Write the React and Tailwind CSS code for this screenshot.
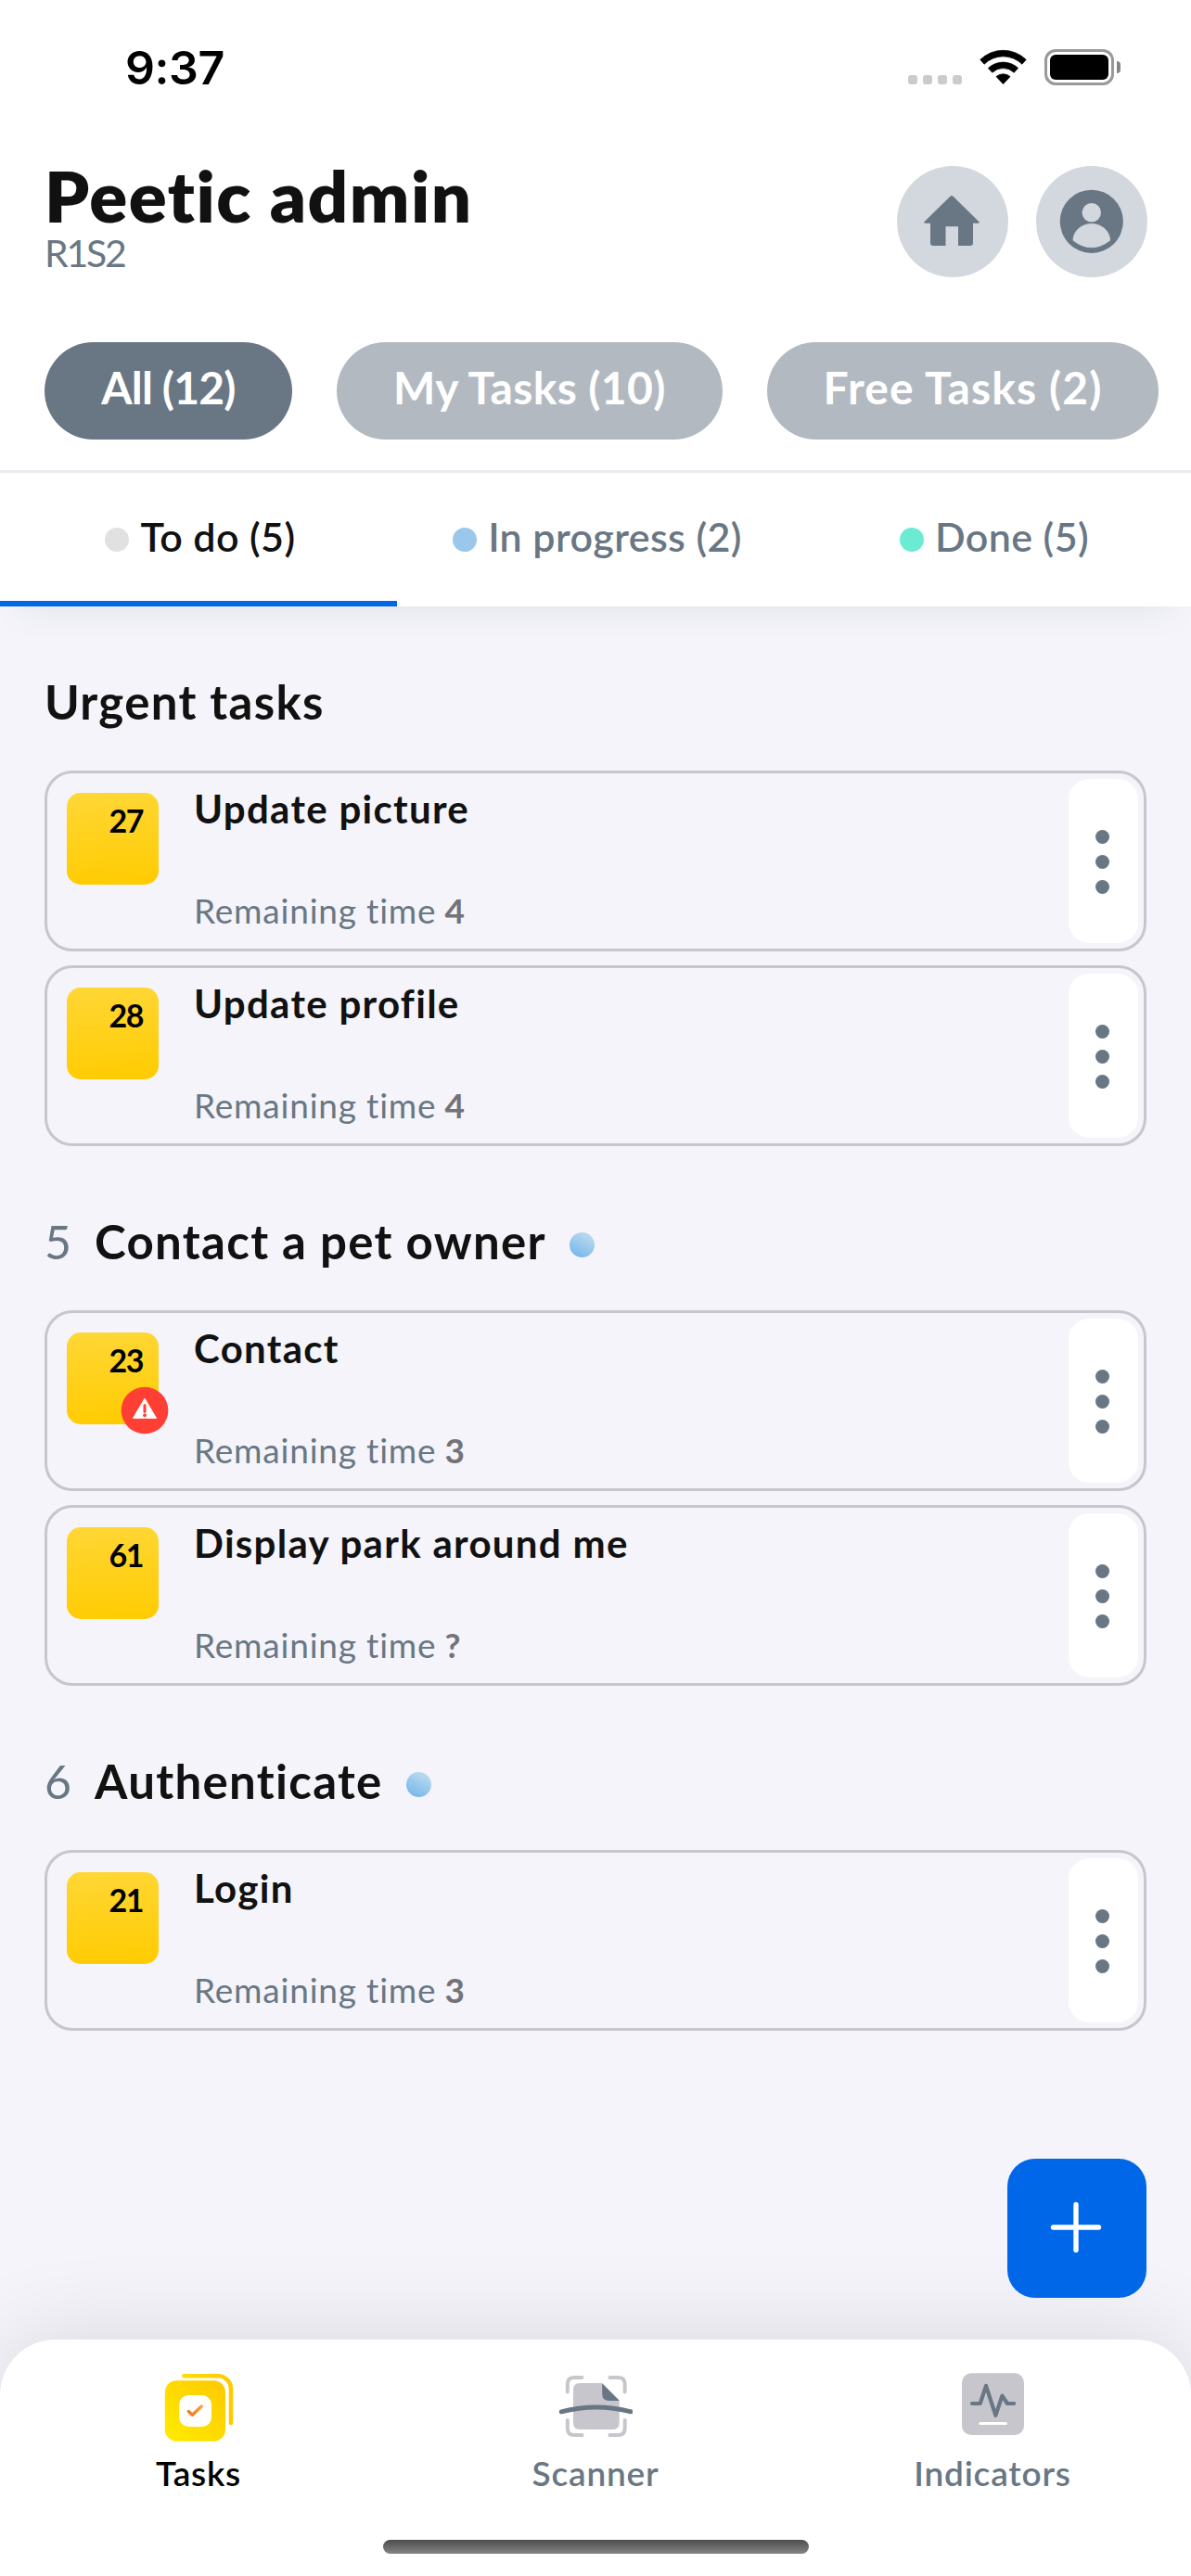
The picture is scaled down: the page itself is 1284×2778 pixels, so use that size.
const filters = [
  { label: 'All (12)', look: 'w-[267px] bg-[#697784] tracking-[-0.8px]' },
  { label: 'My Tasks (10)', look: 'w-[416px] bg-[#b3b9c1] tracking-[0.4px]' },
  { label: 'Free Tasks (2)', look: 'w-[422px] bg-[#b3b9c1] tracking-[1.1px]' },
];

const statuses = [
  { label: 'To do (5)', dot: 'bg-[#e1e1e1]', text: 'text-[#111111]', bar: 'bg-[#0067e9]' },
  { label: 'In progress (2)', dot: 'bg-[#9ac8ed]', text: 'text-[#697784]', bar: 'bg-transparent' },
  { label: 'Done (5)', dot: 'bg-[#6cebd3]', text: 'text-[#697784]', bar: 'bg-transparent' },
];

const sections = [
  {
    title: 'Urgent tasks',
    tasks: [
      { id: '27', title: 'Update picture', remaining: '4' },
      { id: '28', title: 'Update profile', remaining: '4' },
    ],
  },
  {
    number: '5',
    title: 'Contact a pet owner',
    tasks: [
      { id: '23', title: 'Contact', remaining: '3', alert: true },
      { id: '61', title: 'Display park around me', remaining: '?' },
    ],
  },
  {
    number: '6',
    title: 'Authenticate',
    tasks: [{ id: '21', title: 'Login', remaining: '3' }],
  },
];

function StatusBar() {
  return (
    <div className="flex h-[145px] justify-between pl-[135px] pr-[76px]">
      <span className="mt-12 h-[50px] font-[Inter,sans-serif] text-[50px] leading-none font-semibold tracking-[-0.4px] text-black">9:37</span>
      <div className="mt-[53px] flex h-[39px] items-start">
        <div className="mt-7 flex gap-1.5">
          {[0, 1, 2, 3].map((n) => (
            <span key={n} className="size-2.5 rounded-[3px] bg-[#cbcbcb]" />
          ))}
        </div>
        <svg className="ml-[19px] h-[39px] w-[51px]" viewBox="0 0 51 39" fill="#000">
          <path d="M0.8 11.3 A35.5 35.5 0 0 1 50.2 11.3 L45.9 16.2 A29 29 0 0 0 5.1 16.2 Z" stroke="#000" strokeWidth="0.8" strokeLinejoin="round" />
          <path d="M9.4 20.5 A23.5 23.5 0 0 1 41.6 20.5 L37.2 25.2 A17 17 0 0 0 13.8 25.2 Z" stroke="#000" strokeWidth="0.8" strokeLinejoin="round" />
          <path d="M18 29.6 A11.5 11.5 0 0 1 33 29.6 L25.5 37.6 Z" stroke="#000" strokeWidth="0.8" strokeLinejoin="round" />
        </svg>
        <div className="ml-[19px] h-[39px] w-[75px] rounded-[12px] border-[3px] border-[#999999] p-[3px]">
          <div className="h-full w-full rounded-[6px] bg-black" />
        </div>
        <div className="mt-[13px] ml-[3px] h-[13px] w-1 rounded-r-full bg-[#858585]" />
      </div>
    </div>
  );
}

function Header() {
  return (
    <header className="flex h-[224px] items-start justify-between pt-7 pr-[47px] pl-12">
      <div>
        <h1 className="text-[76px] leading-none font-extrabold tracking-[1.5px] text-[#111111]">Peetic admin</h1>
        <p className="mt-[3px] text-[41px] leading-none tracking-[-2.2px] text-[#697784]">R1S2</p>
      </div>
      <div className="mt-1.5 flex gap-[30px]">
        <button className="size-[120px] rounded-full bg-[#d3d8df]">
          <svg viewBox="0 0 120 120" fill="#697784">
            <path d="M57.2 32.9 Q59 31.1 60.8 32.9 L88.3 60 Q89.4 61.7 87.6 61.7 H82 V83 Q82 86 79 86 H66 V65.3 H52.5 V86 H39 Q36 86 36 83 V61.7 H30.4 Q28.6 61.7 29.7 60 Z" />
          </svg>
        </button>
        <button className="size-[120px] rounded-full bg-[#d3d8df]">
          <svg viewBox="0 0 120 120">
            <circle cx="59.8" cy="59.8" r="34.1" fill="#697784" />
            <circle cx="59.8" cy="50.2" r="10.2" fill="#d3d8df" />
            <path d="M40 80.2 A19.8 17.8 0 0 1 79.6 80.2 Q59.8 95.5 40 80.2 Z" fill="#d3d8df" stroke="#d3d8df" strokeWidth="0.8" strokeLinejoin="round" />
          </svg>
        </button>
      </div>
    </header>
  );
}

function Filters() {
  return (
    <div className="flex h-[138px] gap-12 pl-12">
      {filters.map(({ label, look }) => (
        <button key={label} className={`flex h-[105px] shrink-0 items-center justify-center rounded-full pb-2 text-[48px] leading-none font-bold whitespace-nowrap text-white ${look}`}>
          {label}
        </button>
      ))}
    </div>
  );
}

function StatusTabs() {
  return (
    <div className="grid h-[147px] grid-cols-3 border-t-[3px] border-[#ebebef]">
      {statuses.map(({ label, dot, text, bar }) => (
        <button key={label} className="flex h-36 flex-col">
          <span className="flex h-36 w-full shrink-0 items-center justify-center gap-3 pl-1">
            <span className={`size-[26px] rounded-full ${dot}`} />
            <span className={`pb-2 text-[43px] leading-none font-semibold tracking-[0.4px] whitespace-nowrap ${text}`}>{label}</span>
          </span>
          <span className={`-mt-1.5 h-1.5 w-full shrink-0 ${bar}`} />
        </button>
      ))}
    </div>
  );
}

function TaskCard({ task }) {
  return (
    <article className="flex h-[195px] rounded-[30px] border-[3px] border-[#c7c6cc]">
      <div className="relative mt-[21px] ml-[21px] flex size-[99px] shrink-0 justify-end rounded-[15px] bg-linear-[176deg] from-[#ffd736] to-[#ffcb00] pt-[13px] pr-[17px] text-[34px] leading-none font-bold tracking-[-1.5px] text-black">
        {task.id}
        {task.alert && (
          <svg className="absolute top-[58px] left-[58px] size-[52px]" viewBox="0 0 52 52">
            <circle cx="26" cy="26" r="25.3" fill="#ff3f34" />
            <path d="M26 13.2 L38.5 34.3 H13.5 Z" fill="#fff" stroke="#fff" strokeWidth="1" strokeLinejoin="round" />
            <path d="M26 20.5 V27.3" stroke="#ff3f34" strokeWidth="3" strokeLinecap="round" />
            <circle cx="26" cy="31.2" r="1.9" fill="#ff3f34" />
          </svg>
        )}
      </div>
      <div className="ml-[38px] flex-1 pt-[17px]">
        <h3 className="text-[42px] leading-none font-bold tracking-[1.3px] whitespace-nowrap text-[#111111]">{task.title}</h3>
        <p className="mt-[70px] flex text-[37px] leading-none text-[#697784]">
          <span className="tracking-[0.8px]">Remaining time</span>
          <span className="ml-[9px] font-bold text-[#737379]">{task.remaining}</span>
        </p>
      </div>
      <button className="mt-1.5 mr-1.5 flex h-[177px] w-[75px] flex-col items-center justify-center gap-3 rounded-[22px] bg-white pt-0.5 pr-0.5">
        <span className="size-[15px] rounded-full bg-[#697784]" />
        <span className="size-[15px] rounded-full bg-[#697784]" />
        <span className="size-[15px] rounded-full bg-[#697784]" />
      </button>
    </article>
  );
}

function Section({ section }) {
  return (
    <section>
      <h2 className="flex h-[60px] items-center pt-0.5 text-[51px] leading-[60px] font-bold tracking-[1.3px] text-[#111111]">
        {section.number && <span className="w-[54px] text-[50px] font-normal text-[#697784]">{section.number}</span>}
        <span>{section.title}</span>
        {section.number && <span className="mt-[7px] ml-[25px] size-[27px] rounded-full bg-linear-[207deg] from-[#c6e1ef] to-[#6fb1eb]" />}
      </h2>
      <div className="mt-[45px] flex flex-col gap-[15px]">
        {section.tasks.map((task) => (
          <TaskCard key={task.id} task={task} />
        ))}
      </div>
    </section>
  );
}

function TasksIcon() {
  return (
    <svg className="size-20" viewBox="0 0 80 80" fill="none">
      <defs>
        <linearGradient id="tile" x1="4" y1="76" x2="69" y2="10" gradientUnits="userSpaceOnUse">
          <stop stopColor="#ffec00" />
          <stop offset="1" stopColor="#fdc800" />
        </linearGradient>
        <linearGradient id="edge" x1="22" y1="5" x2="77" y2="20" gradientUnits="userSpaceOnUse">
          <stop stopColor="#ffdb08" />
          <stop offset="1" stopColor="#ffc904" />
        </linearGradient>
        <linearGradient id="check" x1="28" y1="46" x2="44" y2="36" gradientUnits="userSpaceOnUse">
          <stop stopColor="#f97316" />
          <stop offset="1" stopColor="#fca63c" />
        </linearGradient>
      </defs>
      <rect x="3.8" y="10.3" width="65.2" height="65.4" rx="12.5" fill="url(#tile)" />
      <path d="M24.3 5.3 H61 A14 14 0 0 1 75 19.3 V56" stroke="url(#edge)" strokeWidth="4.6" strokeLinecap="round" />
      <rect x="19.2" y="26" width="34.8" height="34" rx="10" fill="#fff" />
      <path d="M29.3 43.6 L33.4 47.3 L43.2 38" stroke="url(#check)" strokeWidth="3.4" strokeLinecap="round" strokeLinejoin="round" />
    </svg>
  );
}

function ScannerIcon() {
  return (
    <svg className="size-20" viewBox="0 0 80 80" fill="none">
      <path d="M23 13 H47 L65.7 31.5 V56 Q65.7 63 58.7 63 H23 Q16 63 16 56 V20 Q16 13 23 13 Z" fill="#c7c6cc" />
      <path d="M47.2 13.2 L65.7 32 H54.5 Q47.2 32 47.2 24.5 Z" fill="#697784" />
      <path d="M9.8 22.5 V14.3 Q9.8 6.9 17.2 6.9 H25.5 M55.5 6.9 H64.3 Q71.7 6.9 71.7 14.3 V22.5 M9.8 53 V61.4 Q9.8 68.9 17.2 68.9 H25.5 M55.5 68.9 H64.3 Q71.7 68.9 71.7 61.4 V53" stroke="#c7c6cc" strokeWidth="4" strokeLinecap="round" />
      <path d="M3.2 43.8 Q40.7 34.2 78.2 43.8" stroke="#697784" strokeWidth="4.8" strokeLinecap="round" />
    </svg>
  );
}

function IndicatorsIcon() {
  return (
    <svg className="size-20" viewBox="0 0 80 80" fill="none">
      <rect x="7" y="2.3" width="67" height="66.7" rx="10" fill="#c7c6cc" />
      <path d="M18 35 H26.7 L33 15.8 L43.4 47.8 L50.4 26.6 L56 35 H63.2" stroke="#697784" strokeWidth="4.2" strokeLinecap="round" strokeLinejoin="round" />
      <path d="M26.8 56.5 H54.3" stroke="#fff" strokeWidth="3" strokeLinecap="round" />
    </svg>
  );
}

const tabs = [
  { label: 'Tasks', Icon: TasksIcon, text: 'text-black' },
  { label: 'Scanner', Icon: ScannerIcon, text: 'text-[#697784]' },
  { label: 'Indicators', Icon: IndicatorsIcon, text: 'text-[#697784]' },
];

function TabBar() {
  return (
    <nav className="h-[255px] rounded-t-[60px] bg-white pt-[34px] shadow-[0_0_100px_rgba(0,0,0,0.12)]">
      <div className="grid grid-cols-3">
        {tabs.map(({ label, Icon, text }) => (
          <button key={label} className="flex flex-col items-center">
            <Icon />
            <span className={`mt-[11px] text-[37px] leading-none font-semibold tracking-[0.8px] ${text}`}>{label}</span>
          </button>
        ))}
      </div>
      <div className="mx-auto mt-[54px] h-[15px] w-[459px] rounded-full bg-linear-to-b from-[#4d4d4d] to-[#858585]" />
    </nav>
  );
}

export default function App() {
  return (
    <div className="flex h-[2778px] w-[1284px] flex-col overflow-hidden bg-[#f4f4fa] font-[Lato,sans-serif]">
      <div className="relative z-10 bg-white shadow-[0_24px_36px_-24px_rgba(105,119,132,0.14)]">
        <StatusBar />
        <Header />
        <Filters />
        <StatusTabs />
      </div>
      <main className="relative flex flex-1 flex-col gap-[72px] px-12 pt-[72px]">
        {sections.map((section) => (
          <Section key={section.title} section={section} />
        ))}
        <button className="absolute right-12 bottom-[45px] flex size-[150px] items-center justify-center rounded-[30px] bg-[#0067e9]">
          <svg className="size-[60px]" viewBox="0 0 60 60" stroke="#fff" strokeWidth="5.4" strokeLinecap="round">
            <path d="M29 4.5 V53.5 M4.5 29 H53.5" />
          </svg>
        </button>
      </main>
      <TabBar />
    </div>
  );
}
